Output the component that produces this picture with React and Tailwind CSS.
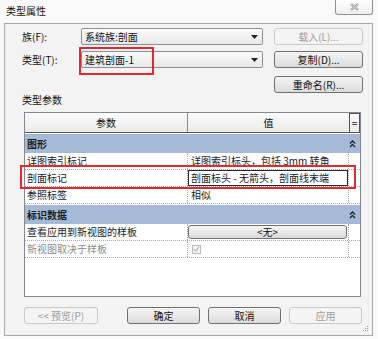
import React from "react";

const font = { fontFamily: '"Noto Sans CJK SC", "Noto Sans", sans-serif' };

function Btn({ children, w = "w-[89px]", disabled }) {
  return (
    <div
      className={`${w} h-[17px] flex items-center justify-center rounded-[3px] border text-[10px] leading-none ${
        disabled
          ? "border-[#c9c9c9] bg-[#f4f4f4] text-[#9c9c9c]"
          : "border-[#707070] bg-gradient-to-b from-[#f4f4f4] to-[#dcdcdc] text-[#111]"
      }`}
    >
      {children}
    </div>
  );
}

function Combo({ value }) {
  return (
    <div className="w-[182px] h-[17px] flex items-center justify-between rounded-[2px] border border-[#8e8e8e] bg-gradient-to-b from-[#fafafa] to-[#e9e9e9] pl-[3px] pr-[4px]">
      <span className="text-[10px] leading-none text-[#111]">{value}</span>
      <svg width="7" height="4" viewBox="0 0 7 4">
        <path d="M0 0h7L3.5 4z" fill="#222" />
      </svg>
    </div>
  );
}

function Chevron() {
  return (
    <svg width="7" height="8" viewBox="0 0 7 8">
      <path d="M1 3.5L3.5 1 6 3.5M1 7L3.5 4.5 6 7" fill="none" stroke="#222" strokeWidth="1.3" />
    </svg>
  );
}

function Group({ label }) {
  return (
    <div className="h-[19px] flex items-center justify-between bg-[#a4bad6] pl-[2px] pr-[4px] mt-[1px]">
      <span className="text-[10px] font-bold leading-none text-[#1a1a1a]">{label}</span>
      <Chevron />
    </div>
  );
}

function Row({ name, value, gray, active }) {
  return (
    <div className="h-[17px] flex border-b border-dotted border-[#a8a8a8]">
      <div className={`w-[163px] flex items-center pl-[2px] border-r border-dotted border-[#a8a8a8] text-[10px] leading-none ${gray ? "text-[#8c8c8c]" : "text-[#1a1a1a]"}`}>
        {name}
      </div>
      <div className="w-[161px] flex border-r border-dotted border-[#a8a8a8]">
        {active ? (
          <div className="flex-1 flex items-center pl-[2px] border border-[#2a2a2a] text-[10px] leading-none text-[#1a1a1a] whitespace-nowrap">
            {value}
          </div>
        ) : (
          value
        )}
      </div>
      <div className="w-[11px]" />
    </div>
  );
}

function Text({ children }) {
  return <div className="flex items-center pl-[3px] text-[10px] leading-none text-[#1a1a1a] whitespace-nowrap">{children}</div>;
}

export default function App() {
  return (
    <div className="w-[378px] h-[339px] bg-[#f9f9f9] flex flex-col" style={font}>
      <div className="h-[23px] flex justify-between">
        <div className="pl-[6px] pt-[5px] text-[10px] leading-[12px] text-[#111]">类型属性</div>
        <div className="mr-[5px] w-[38px] h-[15px] flex items-center justify-center rounded-b-[3px] border border-t-0 border-[#8f8f8f] bg-gradient-to-b from-[#ffffff] to-[#eeeeee]">
          <svg width="9" height="8" viewBox="0 0 9 8">
            <path d="M1 1l7 6M8 1L1 7" stroke="#8a8a8a" strokeWidth="2.2" />
            <path d="M1 1l7 6M8 1L1 7" stroke="#f4f4f4" strokeWidth="0.8" />
          </svg>
        </div>
      </div>

      <div className="relative ml-[4px] w-[369px] h-[313px] border border-[#a8a8a8] bg-[#f3f3f3] flex flex-col">
        <div className="mt-[4px] h-[17px] flex items-center">
          <div className="w-[76px] pl-[17px] text-[10px] leading-none text-[#111]">族(F):</div>
          <Combo value="系统族:剖面" />
          <div className="ml-[11px]">
            <Btn disabled>载入(L)...</Btn>
          </div>
        </div>
        <div className="mt-[6px] h-[17px] flex items-center">
          <div className="w-[76px] pl-[17px] text-[10px] leading-none text-[#111]">类型(T):</div>
          <Combo value="建筑剖面-1" />
          <div className="ml-[11px]">
            <Btn>复制(D)...</Btn>
          </div>
        </div>
        <div className="mt-[8px] h-[17px] flex pl-[269px]">
          <Btn>重命名(R)...</Btn>
        </div>
        <div className="h-[13px] pl-[17px] text-[10px] leading-[13px] text-[#111]">类型参数</div>

        <div className="mt-[6px] ml-[19px] w-[337px] h-[185px] border border-[#828790] bg-white flex flex-col">
          <div className="h-[20px] flex border-b border-[#555] bg-gradient-to-b from-[#fbfbfb] to-[#ebebeb]">
            <div className="w-[163px] flex items-center justify-center border-r border-[#8a8a8a] text-[10px] leading-none text-[#111]">参数</div>
            <div className="w-[161px] flex items-center justify-center text-[10px] leading-none text-[#111]">值</div>
            <div className="w-[11px] flex items-center justify-center border-x border-t border-[#555] text-[10px] leading-none text-[#111]">=</div>
          </div>
          <Group label="图形" />
          <Row name="详图索引标记" value={<Text>详图索引标头，包括 3mm 转角</Text>} />
          <Row name="剖面标记" active value="剖面标头 - 无箭头，剖面线末端" />
          <Row name="参照标签" value={<Text>相似</Text>} />
          <Group label="标识数据" />
          <Row
            name="查看应用到新视图的样板"
            value={
              <div className="flex-1 my-[1px] mr-[1px] flex items-center justify-center rounded-[3px] border border-[#707070] bg-gradient-to-b from-[#f6f6f6] to-[#dadada] text-[10px] leading-none text-[#111]">
                &lt;无&gt;
              </div>
            }
          />
          <Row
            name="新视图取决于样板"
            gray
            value={
              <div className="flex items-center pl-[4px]">
                <div className="w-[9px] h-[9px] border border-[#b9b9b9] bg-[#f4f4f4] flex items-center justify-center">
                  <svg width="7" height="6" viewBox="0 0 7 6">
                    <path d="M0.8 3.2L2.6 5 6.2 0.8" fill="none" stroke="#b0b0b0" strokeWidth="1.1" />
                  </svg>
                </div>
              </div>
            }
          />
        </div>

        <div className="mt-[10px] flex">
          <div className="ml-[19px]">
            <Btn w="w-[74px]" disabled>&lt;&lt; 预览(P)</Btn>
          </div>
          <div className="ml-[29px]">
            <Btn w="w-[73px]">确定</Btn>
          </div>
          <div className="ml-[8px]">
            <Btn w="w-[73px]">取消</Btn>
          </div>
          <div className="ml-[8px]">
            <Btn w="w-[73px]" disabled>应用</Btn>
          </div>
        </div>

        <div className="absolute left-[74px] top-[23px] w-[75px] h-[28px] border-2 border-[#de2a30]" />
        <div className="absolute left-[15px] top-[141px] w-[336px] h-[24px] border-2 border-[#de2a30]" />
        <svg className="absolute right-[3px] bottom-[3px]" width="6" height="6" viewBox="0 0 6 6">
          <rect x="4" y="0" width="1" height="1" fill="#9a9a9a" />
          <rect x="2" y="2" width="1" height="1" fill="#9a9a9a" />
          <rect x="4" y="2" width="1" height="1" fill="#9a9a9a" />
          <rect x="0" y="4" width="1" height="1" fill="#9a9a9a" />
          <rect x="2" y="4" width="1" height="1" fill="#9a9a9a" />
          <rect x="4" y="4" width="1" height="1" fill="#9a9a9a" />
        </svg>
      </div>
    </div>
  );
}
